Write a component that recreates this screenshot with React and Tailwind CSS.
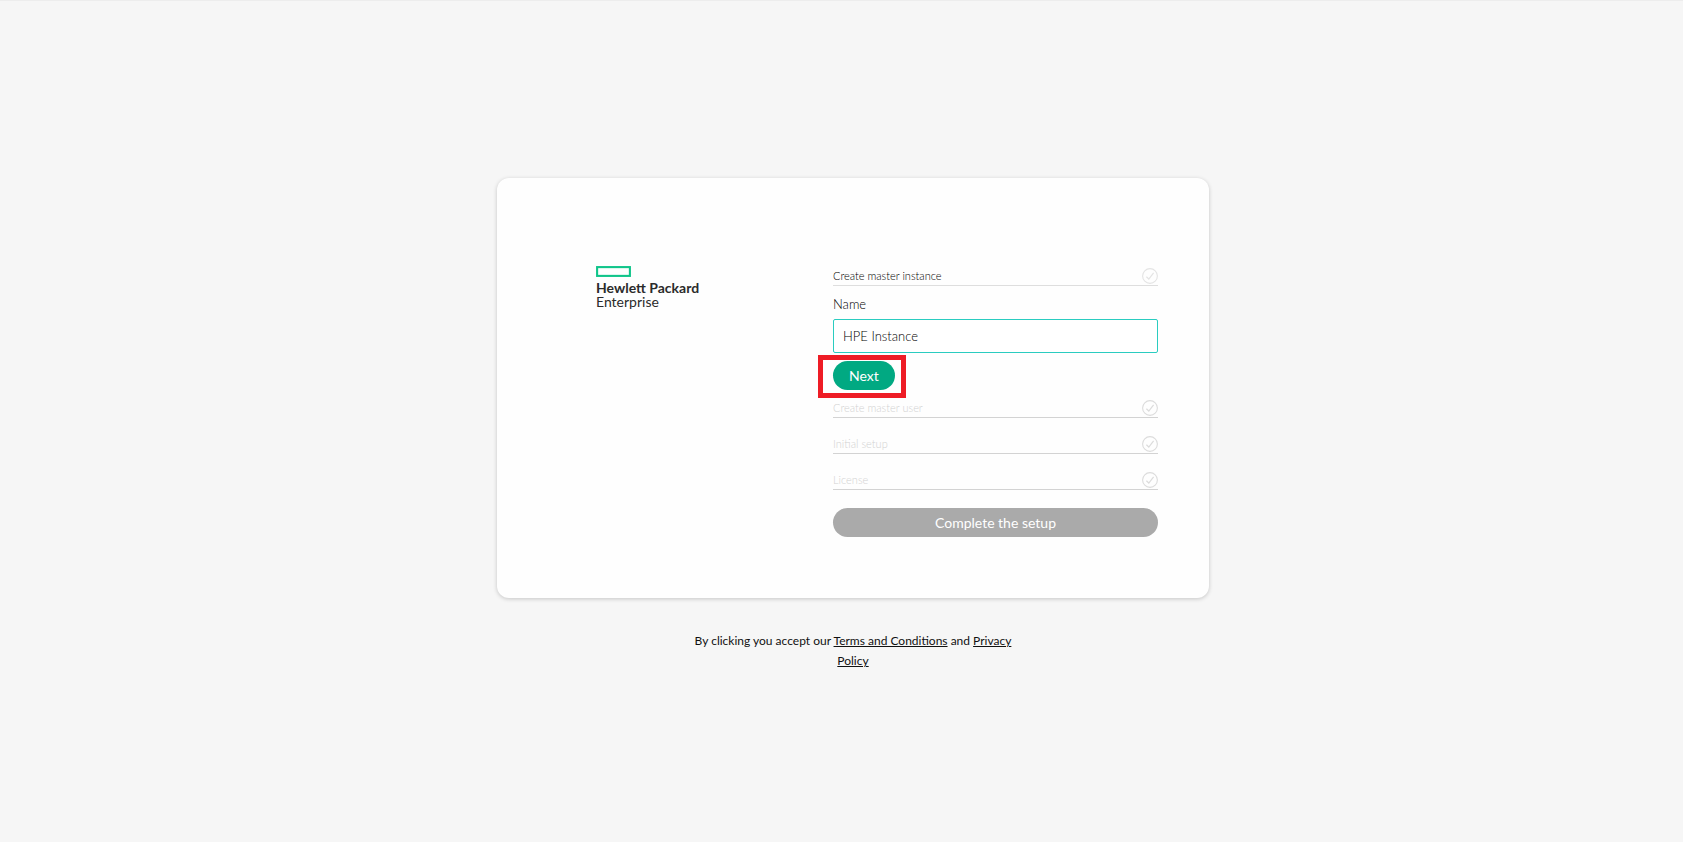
import React, { useState } from "react";

const StepCheck = () => (
  <svg viewBox="0 0 16 16" className="h-4 w-4 shrink-0" fill="none" stroke="currentColor" aria-hidden="true">
    <circle cx="8" cy="8" r="7.4" strokeWidth="1.1" />
    <path d="M4.4 8.8 6.8 11l4.8-6.2" strokeWidth="1.2" />
  </svg>
);

const StepHeader = ({ title, active }) => (
  <div
    className={
      active
        ? "flex h-5 items-center justify-between border-b border-[#dedede] text-[#e4e4e4]"
        : "flex h-5 items-center justify-between border-b border-[#d3d3d3] text-[#dcdcdc]"
    }
  >
    <h2
      className={
        active
          ? "text-[11px] leading-4 font-light text-black"
          : "text-[11px] leading-4 font-light text-[#d2d2d2]"
      }
    >
      {title}
    </h2>
    <StepCheck />
  </div>
);

const Logo = () => (
  <div className="text-[#2b2b2b]">
    <svg viewBox="0 0 35 11" className="h-[11px] w-[35px]" fill="none" aria-hidden="true">
      <rect x="1.1" y="1.1" width="32.8" height="8.8" stroke="#10c58a" strokeWidth="2.1" />
    </svg>
    <p className="mt-1 text-[14px] leading-[14px] font-bold">Hewlett Packard</p>
    <p className="text-[14px] leading-[14px]">Enterprise</p>
  </div>
);

const App = () => {
  const [name, setName] = useState("HPE Instance");

  const handleSubmit = (e) => {
    e.preventDefault();
  };

  return (
    <main className="min-h-screen border-t border-[#ededed] bg-[#f6f6f6] pt-[177px] pl-[23px] font-['Lato',sans-serif]">
      <div className="mx-auto w-full max-w-[712px]">
        {/* Setup card */}
        <section className="flex rounded-xl bg-[#fefefe] pt-[88px] pr-[51px] pb-[61px] pl-[99px] shadow-[0_1px_4px_rgba(0,0,0,0.2)]">
          <div className="flex-1">
            <Logo />
          </div>

          <div className="w-[325px]">
            <StepHeader title="Create master instance" active />
            <form onSubmit={handleSubmit} className="my-2">
              <label htmlFor="name" className="block text-[13px] leading-5 font-light text-black">
                Name
              </label>
              <input
                id="name"
                type="text"
                value={name}
                onChange={(e) => setName(e.target.value)}
                className="mt-[5px] block h-[34px] w-full rounded-xs border border-[#2accc0] bg-white px-[9px] text-[13px] font-light text-black outline-none"
              />
              <div className="relative mt-2 w-fit">
                <button
                  type="submit"
                  className="block h-[29px] rounded-full bg-[#01a982] px-4 text-[14px] leading-5 text-white"
                >
                  Next
                </button>
                {/* Highlight frame */}
                <div className="pointer-events-none absolute -top-[6px] -right-[11px] -bottom-2 -left-[15px] border-[5px] border-[#ee1c25]" />
              </div>
            </form>

            <div className="flex flex-col gap-4">
              <StepHeader title="Create master user" />
              <StepHeader title="Initial setup" />
              <StepHeader title="License" />
            </div>

            <button
              type="button"
              disabled
              className="mt-[18px] block h-[29px] w-full rounded-full bg-[#aaaaaa] text-[14px] leading-5 text-white"
            >
              Complete the setup
            </button>
          </div>
        </section>

        {/* Legal note */}
        <p className="mx-auto mt-[33px] max-w-[340px] text-center text-[12px] leading-5 text-[#111111]">
          By clicking you accept our{" "}
          <a href="#terms" className="underline">
            Terms and Conditions
          </a>{" "}
          and{" "}
          <a href="#privacy" className="underline">
            Privacy Policy
          </a>
        </p>
      </div>
    </main>
  );
};

export default App;
